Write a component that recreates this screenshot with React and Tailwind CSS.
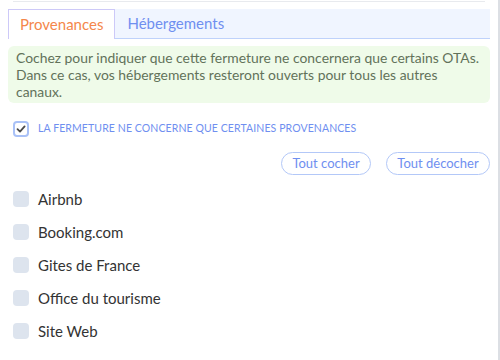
import { useState } from "react";

const sources = ["Airbnb", "Booking.com", "Gites de France", "Office du tourisme", "Site Web"];

function CheckMark() {
  return (
    <svg width="10" height="10" viewBox="0 0 10 10" fill="none">
      <path d="M1.5 5.2 L4 7.6 L8.6 2.4" stroke="#4a4a4a" strokeWidth="1.8" strokeLinecap="round" strokeLinejoin="round" />
    </svg>
  );
}

export default function App() {
  const [tab, setTab] = useState("prov");

  return (
    <div className="w-[500px] h-[360px] bg-white flex overflow-hidden font-['Lato','Open_Sans',sans-serif]">
      <div className="w-[498px] flex flex-col">
        {/* top separator */}
        <div className="h-px mt-px mx-[13px] bg-[#e8eaee]" />

        {/* TABS */}
        <div className="mt-[7px] mx-2 h-[30px] flex bg-[#f0f5ff] border-b border-[#bfd2fb]">
          <button
            onClick={() => setTab("prov")}
            className="h-[30px] px-[11px] bg-white border border-b-0 border-[#cdc9f8] text-[15px] text-[#f4874b] leading-none"
          >
            Provenances
          </button>
          <button
            onClick={() => setTab("heb")}
            className="h-[29px] px-3 text-[15px] text-[#6f8ff0] leading-none"
          >
            Hébergements
          </button>
        </div>

        {/* INFO */}
        <div className="mt-[7px] mx-2 rounded-md bg-[#effbe9] px-2 py-[3px] text-[13.9px] leading-[17px] text-[#62725a]">
          Cochez pour indiquer que cette fermeture ne concernera que certains OTAs.
          <br />
          Dans ce cas, vos hébergements resteront ouverts pour tous les autres
          <br />
          canaux.
        </div>

        {/* RESTRICT */}
        <label className="mt-[18px] ml-[13px] flex items-center gap-[9px]">
          <span className="w-4 h-4 rounded-[4px] border-2 border-[#a9c1f7] bg-white flex items-center justify-center">
            <CheckMark />
          </span>
          <span className="text-[10.5px] text-[#6f8ff0] tracking-[0.1px]">
            LA FERMETURE NE CONCERNE QUE CERTAINES PROVENANCES
          </span>
        </label>

        {/* BUTTONS */}
        <div className="mt-[15px] mx-2 flex justify-end gap-[15px]">
          <button className="h-[23px] w-[90px] rounded-full border border-[#b3c8f8] text-[13px] text-[#6f8ff0]">
            Tout cocher
          </button>
          <button className="h-[23px] w-[104px] rounded-full border border-[#b3c8f8] text-[13px] text-[#6f8ff0]">
            Tout décocher
          </button>
        </div>

        {/* LIST */}
        <div className="mt-[16px] ml-[13px] flex flex-col gap-[17px]">
          {sources.map((s) => (
            <div key={s} className="flex items-center gap-[9px] h-4">
              <span className="w-4 h-4 rounded-[4px] bg-[#dde4ee]" />
              <span className="text-[15px] text-[#333333]">{s}</span>
            </div>
          ))}
        </div>
      </div>
      <div className="w-[2px] h-full bg-[#dcdfe4]" />
    </div>
  );
}
